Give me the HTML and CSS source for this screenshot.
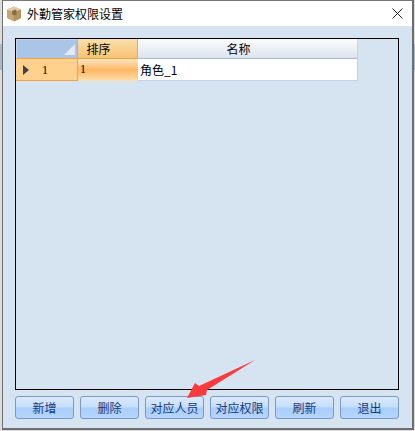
FILE: index.html

```html
<!DOCTYPE html>
<html lang="zh-CN">
<head>
  <meta charset="UTF-8">
  <title>外勤管家权限设置</title>
  <link rel="stylesheet" href="styles.css">
</head>
<body>
  <div class="window">
    <div class="titlebar">
      <svg class="app-icon" width="16" height="16" viewBox="0 0 16 16">
        <path d="M8 0.500 L15 3.500 L15 12 L8 15.500 L1 12 L1 3.500 Z" fill="#c4a673"/>
        <path d="M1 3.500 L8 0.500 L15 3.500 L8 6.500 Z" fill="#e0cba4"/>
        <path d="M8 6.500 L15 3.500 L15 12 L8 15.500 Z" fill="#b39360"/>
        <path d="M6 5 L9 3.500 L10.500 4.500 L10.500 8.500 L8 9.500 L6 8 Z" fill="#8a6f45"/>
      </svg>
      <span class="title">外勤管家权限设置</span>
      <svg class="close" width="11" height="11" viewBox="0 0 11 11">
        <path d="M0.500 0.500 L10.500 10.500 M10.500 0.500 L0.500 10.500" stroke="#222" stroke-width="1" fill="none"/>
      </svg>
    </div>
    <div class="content">
      <div class="grid">
        <div class="grid-head">
          <div class="corner"><span class="corner-mark"></span></div>
          <div class="col-sort">排序</div>
          <div class="col-name">名称</div>
        </div>
        <div class="grid-row">
          <div class="row-head"><span class="row-arrow"></span><span>1</span></div>
          <div class="cell-sort">1</div>
          <div class="cell-name">角色_1</div>
        </div>
      </div>
      <div class="buttons">
        <button class="btn">新增</button>
        <button class="btn">删除</button>
        <button class="btn">对应人员</button>
        <button class="btn">对应权限</button>
        <button class="btn">刷新</button>
        <button class="btn">退出</button>
      </div>
    </div>
  </div>
  <svg class="arrow" width="415" height="431" viewBox="0 0 415 431">
    <path d="M187 398 L195 383 L199 386 L255 360 L207 390 L206 395 Z" fill="#fb3a3e"/>
  </svg>
</body>
</html>
```

FILE: styles.css

```css
* { margin: 0; padding: 0; box-sizing: border-box; }
html, body { width: 415px; height: 431px; overflow: hidden; }
body { position: relative; padding: 0 1px 1px 2px; background: linear-gradient(#dcdcdc 0, #dcdcdc 44px, #a9b9cc 44px, #a9b9cc 70px, #dcdcdc 70px); font-family: "Noto Sans CJK SC", "Liberation Sans", sans-serif; color: #111; }

.window { height: 430px; display: flex; flex-direction: column; border: 1px solid #6e6e6e; border-top-color: #777; border-width: 1px 2px 2px 1px; background: #d6e4f1; }

.titlebar { height: 25px; flex: none; display: flex; align-items: center; padding: 0 9px 0 3px; background: white; }
.app-icon { flex: none; margin-right: 5px; }
.title { flex: 1; font-size: 12px; color: #000; }
.close { flex: none; }

.content { flex: 1; display: flex; flex-direction: column; padding: 12px 13px 9px 12px; }

.grid { flex: 1; border: 1px solid #000; background: #d6e4f1; }
.grid-head, .grid-row { display: flex; width: 342px; }
.grid-head { height: 20px; font-size: 12px; text-align: center; line-height: 19px; color: #000; }
.corner { width: 62px; position: relative; background: #abc5e8; border: 1px solid #c3d6ee; border-bottom-color: #f3a33f; border-right-color: #f3a33f; }
.corner-mark { position: absolute; right: 2px; bottom: 3px; width: 0; height: 0; border-style: solid; border-width: 0 0 11px 11px; border-color: transparent transparent #e4eaf2 transparent; }
.col-sort { width: 60px; padding-right: 18px; background: linear-gradient(#fbe0ad, #f5c272); border-right: 1px solid #f0a94f; border-bottom: 1px solid #f3a33f; }
.col-name { flex: 1; padding-right: 18px; background: linear-gradient(#fbfcfd, #dde3ee); border-bottom: 1px solid #a5bcd8; border-right: 1px solid #c6d3e4; }

.grid-row { height: 22px; font-size: 12px; line-height: 22px; color: #000; }
.row-head { width: 62px; display: flex; align-items: center; background: #fed28c; border-right: 1px solid #f3a33f; border-bottom: 1px solid #f3a33f; font-family: "Liberation Serif", serif; }
.row-arrow { width: 0; height: 0; margin: 0 13px 0 7px; border-style: solid; border-width: 5px 0 5px 6px; border-color: transparent transparent transparent #3c4450; }
.cell-sort { width: 60px; padding-left: 2px; line-height: 20px; background: linear-gradient(#ffe6c0, #fdb765 50%, #ffe0ac); font-family: "Liberation Serif", serif; }
.cell-name { flex: 1; padding-left: 2px; background: white; border-right: 1px solid #c6d3e4; border-bottom: 1px solid #c6d3e4; }

.buttons { flex: none; display: flex; gap: 6px; margin-top: 6px; }
.btn { width: 59px; height: 23px; border: 1px solid #7d9ac4; border-radius: 3px; background: linear-gradient(#dbeafd, #c7defb 45%, #aacffc 55%, #b4d5fd); color: #15397f; font-family: "Noto Sans CJK SC", sans-serif; font-size: 12px; }

.arrow { position: absolute; left: 0; top: 0; pointer-events: none; }
```
